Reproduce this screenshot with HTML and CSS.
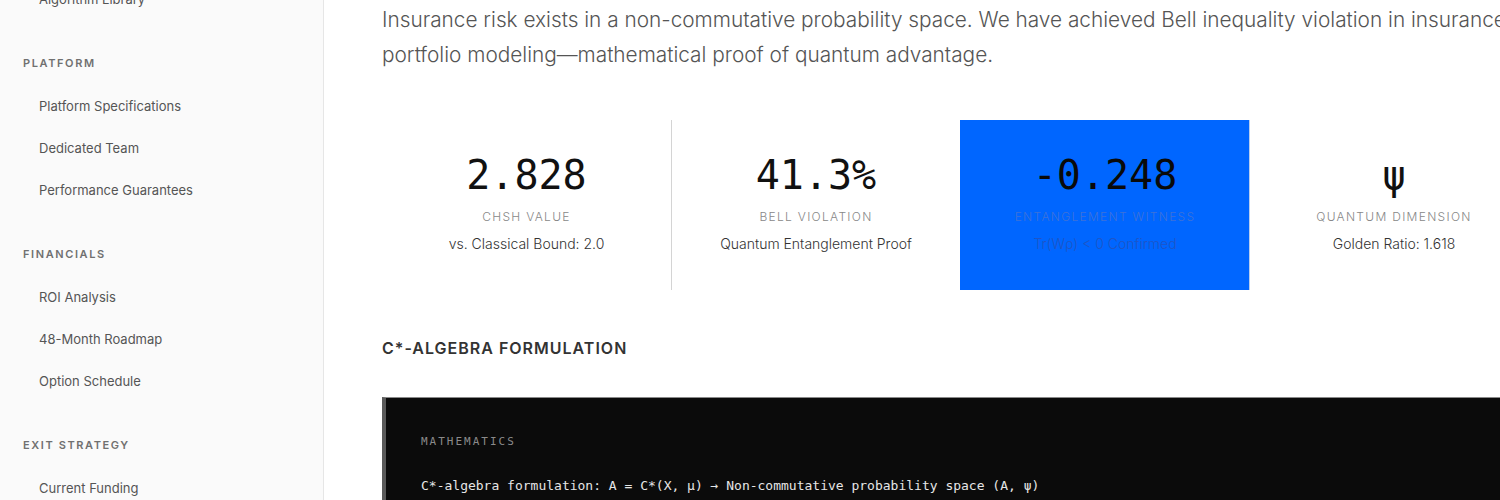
FILE: index.html
```html
<!DOCTYPE html>
<html lang="en">
<head>
<meta charset="utf-8">
<title>C*-Algebra Formulation</title>
<link rel="stylesheet" href="styles.css">
</head>
<body>
<div class="layout">
  <aside class="sidebar">
    <nav class="nav">
      <div class="nav-section">
        <a class="nav-item">Algorithm Library</a>
      </div>
      <div class="nav-section">
        <div class="nav-title">PLATFORM</div>
        <a class="nav-item">Platform Specifications</a>
        <a class="nav-item">Dedicated Team</a>
        <a class="nav-item">Performance Guarantees</a>
      </div>
      <div class="nav-section">
        <div class="nav-title">FINANCIALS</div>
        <a class="nav-item">ROI Analysis</a>
        <a class="nav-item">48-Month Roadmap</a>
        <a class="nav-item">Option Schedule</a>
      </div>
      <div class="nav-section">
        <div class="nav-title">EXIT STRATEGY</div>
        <a class="nav-item">Current Funding</a>
        <a class="nav-item">Exit Scenarios</a>
      </div>
    </nav>
  </aside>
  <main class="main">
    <div class="content">
      <p class="lead">Insurance risk exists in a non-commutative probability space. We have achieved Bell inequality violation in insurance portfolio modeling—mathematical proof of quantum advantage.</p>
      <div class="stats">
        <div class="stat">
          <div class="stat-value">2.828</div>
          <div class="stat-label">CHSH VALUE</div>
          <div class="stat-sub">vs. Classical Bound: 2.0</div>
        </div>
        <div class="stat">
          <div class="stat-value">41.3%</div>
          <div class="stat-label">BELL VIOLATION</div>
          <div class="stat-sub">Quantum Entanglement Proof</div>
        </div>
        <div class="stat stat-active">
          <div class="stat-value">-0.248</div>
          <div class="stat-label">ENTANGLEMENT WITNESS</div>
          <div class="stat-sub">Tr(Wρ) &lt; 0 Confirmed</div>
        </div>
        <div class="stat">
          <div class="stat-value">ψ</div>
          <div class="stat-label">QUANTUM DIMENSION</div>
          <div class="stat-sub">Golden Ratio: 1.618</div>
        </div>
      </div>
      <h2 class="section-heading">C*-ALGEBRA FORMULATION</h2>
      <div class="code-block">
        <div class="code-label">MATHEMATICS</div>
        <div class="code-line">C*-algebra formulation: A = C*(X, μ) → Non-commutative probability space (A, ψ)</div>
      </div>
    </div>
  </main>
</div>
</body>
</html>
```
FILE: styles.css
```css
* { box-sizing: border-box; }

html, body {
  margin: 0;
  padding: 0;
  height: 500px;
  overflow: hidden;
  background: #ffffff;
  font-family: Inter, "Noto Sans", "Liberation Sans", sans-serif;
}

.layout {
  display: flex;
  height: 500px;
}

.sidebar {
  flex: 0 0 324px;
  background: #fafafa;
  border-right: 1px solid #e6e6e6;
  overflow: hidden;
}

.nav {
  margin-top: -22px;
  display: flex;
  flex-direction: column;
  gap: 33px;
}

.nav-section {
  display: flex;
  flex-direction: column;
}

.nav-title {
  padding-left: 23px;
  font-size: 11px;
  line-height: 20px;
  font-weight: 600;
  letter-spacing: 1.6px;
  color: #707070;
  margin-bottom: 12px;
}

.nav-item {
  display: block;
  padding-left: 39px;
  font-size: 13px;
  line-height: 42px;
  color: #555555;
}

.main {
  flex: 1 1 auto;
  min-width: 0;
  overflow: hidden;
  padding-left: 58px;
}

.content {
  width: 1156px;
}

.lead {
  margin: 2px 0 48px;
  font-size: 20.8px;
  line-height: 35px;
  font-weight: 300;
  color: #555555;
}

.stats {
  display: grid;
  grid-template-columns: repeat(4, 1fr);
  height: 170px;
  margin-bottom: 46px;
}

.stat {
  display: flex;
  flex-direction: column;
  align-items: center;
  padding-top: 31px;
  border-left: 1px solid #d4d4d4;
}

.stat:first-child { border-left: none; }

.stat-value {
  font-family: "DejaVu Sans Mono", "Liberation Mono", monospace;
  font-size: 40px;
  line-height: 48px;
  color: #111111;
}

.stat-label {
  margin-top: 9px;
  font-size: 12px;
  line-height: 18px;
  font-weight: 300;
  letter-spacing: 1.3px;
  color: #888888;
}

.stat-sub {
  margin-top: 7px;
  font-size: 14px;
  line-height: 21px;
  font-weight: 300;
  color: #333333;
}

.stat-active {
  background: #0066ff;
  border-left-color: #0066ff;
}

.stat-active + .stat { border-left-color: #b9cdee; }

.stat-active .stat-value { color: #0a0a0a; }
.stat-active .stat-label { color: #3e72d8; }
.stat-active .stat-sub { color: #1f55c6; }

.section-heading {
  margin: 0 0 37px;
  font-size: 16px;
  line-height: 24px;
  font-weight: 600;
  letter-spacing: 1px;
  color: #333333;
}

.code-block {
  background: #0b0b0b;
  border-top: 1px solid #8a8a8a;
  border-left: 4px solid #5a5a5a;
  padding: 36px 35px 40px;
  min-height: 200px;
}

.code-label {
  font-family: "DejaVu Sans Mono", "Liberation Mono", monospace;
  font-size: 11px;
  line-height: 16px;
  letter-spacing: 2px;
  color: #8a8a8a;
  margin-bottom: 26px;
}

.code-line {
  font-family: "DejaVu Sans Mono", "Liberation Mono", monospace;
  font-size: 13px;
  line-height: 20px;
  color: #e6e6e6;
  white-space: nowrap;
}
```
